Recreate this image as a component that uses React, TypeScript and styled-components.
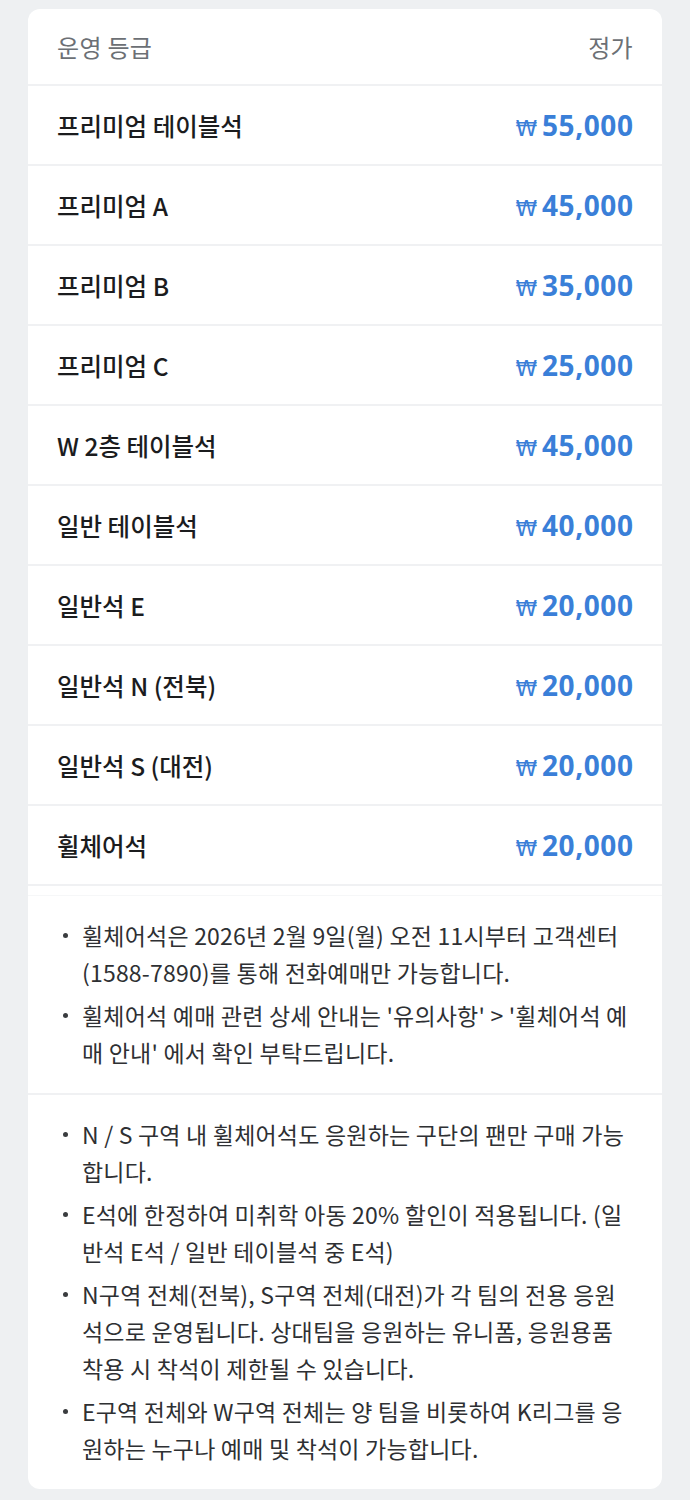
import React from 'react';
import styled, { createGlobalStyle } from 'styled-components';

const GlobalStyle = createGlobalStyle`
  html, body {
    margin: 0;
    padding: 0;
    background: #eef0f2;
  }
  body {
    font-family: "Noto Sans CJK KR", "Noto Sans", sans-serif;
    -webkit-font-smoothing: antialiased;
  }
  * {
    box-sizing: border-box;
  }
`;

const Page = styled.div`
  padding: 9px 28px 7px;
`;

const Card = styled.div`
  background: #ffffff;
  border-radius: 12px;
  overflow: hidden;
`;

const Row = styled.div<{ $head?: boolean }>`
  display: flex;
  align-items: center;
  justify-content: space-between;
  height: ${p => (p.$head ? '77px' : '80px')};
  padding: 0 29px;
  border-bottom: 2px solid #f0f1f3;
`;

const HeadText = styled.span`
  font-size: 24px;
  color: #6c7075;
  letter-spacing: 0.3px;
`;

const Grade = styled.span`
  font-size: 24.5px;
  font-weight: 500;
  color: #1b1c1e;
`;

const Price = styled.span`
  display: flex;
  align-items: baseline;
  font-family: "Noto Sans", "Noto Sans CJK KR", sans-serif;
  font-size: 28px;
  font-weight: 700;
  color: #3a7fd8;
  letter-spacing: 0.6px;
  margin-right: -0.6px;
`;

const Won = styled.span`
  font-family: "DejaVu Sans", sans-serif;
  font-weight: 400;
  font-size: 22px;
  margin-right: 4px;
`;

const Spacer = styled.div`
  height: 10px;
  border-bottom: 1px solid #f6f7f8;
`;

const Notes = styled.ul<{ $last?: boolean }>`
  list-style: none;
  margin: 0;
  padding: 21px 29px 22px 35px;
  border-bottom: ${p => (p.$last ? 'none' : '2px solid #f0f1f3')};
  display: flex;
  flex-direction: column;
  gap: 6px;
`;

const Note = styled.li`
  position: relative;
  padding-left: 19px;
  font-size: 23px;
  line-height: 37px;
  color: #2e3033;
  letter-spacing: 0.2px;

  &::before {
    content: '';
    position: absolute;
    left: 0;
    top: 16px;
    width: 5px;
    height: 5px;
    border-radius: 50%;
    background: #3a3c3f;
  }
`;

const grades = [
  { name: '프리미엄 테이블석', price: '55,000' },
  { name: '프리미엄 A', price: '45,000' },
  { name: '프리미엄 B', price: '35,000' },
  { name: '프리미엄 C', price: '25,000' },
  { name: 'W 2층 테이블석', price: '45,000' },
  { name: '일반 테이블석', price: '40,000' },
  { name: '일반석 E', price: '20,000' },
  { name: '일반석 N (전북)', price: '20,000' },
  { name: '일반석 S (대전)', price: '20,000' },
  { name: '휠체어석', price: '20,000' },
];

const wheelchairNotes = [
  '휠체어석은 2026년 2월 9일(월) 오전 11시부터 고객센터 (1588-7890)를 통해 전화예매만 가능합니다.',
  "휠체어석 예매 관련 상세 안내는 '유의사항' > '휠체어석 예매 안내' 에서 확인 부탁드립니다.",
];

const zoneNotes = [
  'N / S 구역 내 휠체어석도 응원하는 구단의 팬만 구매 가능합니다.',
  'E석에 한정하여 미취학 아동 20% 할인이 적용됩니다. (일반석 E석 / 일반 테이블석 중 E석)',
  'N구역 전체(전북), S구역 전체(대전)가 각 팀의 전용 응원석으로 운영됩니다. 상대팀을 응원하는 유니폼, 응원용품 착용 시 착석이 제한될 수 있습니다.',
  'E구역 전체와 W구역 전체는 양 팀을 비롯하여 K리그를 응원하는 누구나 예매 및 착석이 가능합니다.',
];

const App = () => {
  return (
    <>
      <GlobalStyle />
      <Page>
        <Card>
          <Row $head>
            <HeadText>운영 등급</HeadText>
            <HeadText>정가</HeadText>
          </Row>
          {grades.map(g => (
            <Row key={g.name}>
              <Grade>{g.name}</Grade>
              <Price>
                <Won>₩</Won>
                {g.price}
              </Price>
            </Row>
          ))}
          <Spacer />
          <Notes>
            {wheelchairNotes.map(n => (
              <Note key={n}>{n}</Note>
            ))}
          </Notes>
          <Notes $last>
            {zoneNotes.map(n => (
              <Note key={n}>{n}</Note>
            ))}
          </Notes>
        </Card>
      </Page>
    </>
  );
};

export default App;
